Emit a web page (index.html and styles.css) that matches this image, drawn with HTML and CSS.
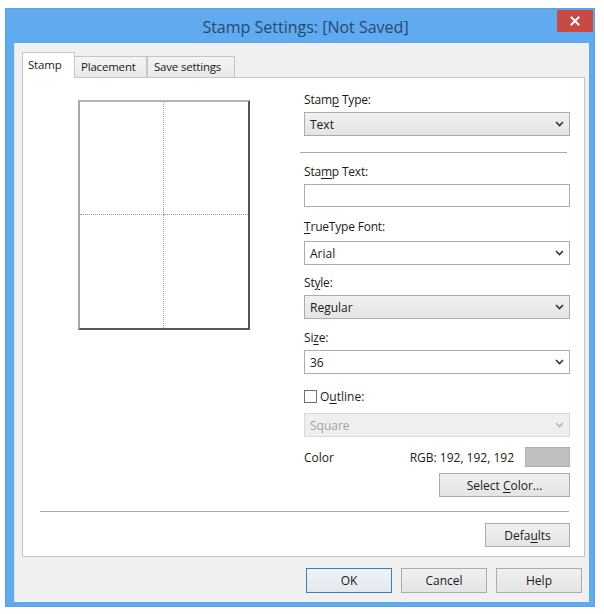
FILE: index.html
```html
<!DOCTYPE html>
<html>
<head>
<meta charset="utf-8">
<link rel="stylesheet" href="styles.css">
</head>
<body>
<div class="window">
  <div class="titlebar">
    <div></div>
    <div class="title">Stamp Settings: [Not Saved]</div>
    <div class="close">
      <svg width="10" height="10" viewBox="0 0 10 10"><path d="M1.5 1.5 L8.5 8.5 M8.5 1.5 L1.5 8.5" stroke="#fff" stroke-width="2" stroke-linecap="square"/></svg>
    </div>
  </div>
  <div class="client">
    <div class="tabs">
      <div class="tab active">Stamp</div>
      <div class="tab t-place">Placement</div>
      <div class="tab t-save">Save settings</div>
    </div>
    <div class="panel">
      <div class="top">
        <div class="preview">
          <div class="cell c1"></div><div class="cell c2"></div>
          <div class="cell c3"></div><div class="cell c4"></div>
        </div>
        <div class="form">
          <div class="label">Stam<u>p</u> Type:</div>
          <div class="combo gray g1"><span>Text</span><svg class="chev" width="9" height="6" viewBox="0 0 9 6"><path d="M1 1 L4.5 4.5 L8 1" fill="none" stroke="#333" stroke-width="1.6"/></svg></div>
          <div class="sep sep1"></div>
          <div class="label l2">Sta<u>m</u>p Text:</div>
          <div class="input"></div>
          <div class="label l3"><u>T</u>rueType Font:</div>
          <div class="combo white g3"><span>Arial</span><svg class="chev" width="9" height="6" viewBox="0 0 9 6"><path d="M1 1 L4.5 4.5 L8 1" fill="none" stroke="#333" stroke-width="1.6"/></svg></div>
          <div class="label l4">St<u>y</u>le:</div>
          <div class="combo gray g4"><span>Regular</span><svg class="chev" width="9" height="6" viewBox="0 0 9 6"><path d="M1 1 L4.5 4.5 L8 1" fill="none" stroke="#333" stroke-width="1.6"/></svg></div>
          <div class="label l5">Si<u>z</u>e:</div>
          <div class="combo white g4"><span>36</span><svg class="chev" width="9" height="6" viewBox="0 0 9 6"><path d="M1 1 L4.5 4.5 L8 1" fill="none" stroke="#333" stroke-width="1.6"/></svg></div>
          <div class="check-row"><span class="box"></span><span>O<u>u</u>tline:</span></div>
          <div class="combo disabled g6"><span>Square</span><svg class="chev" width="9" height="6" viewBox="0 0 9 6"><path d="M1 1 L4.5 4.5 L8 1" fill="none" stroke="#b8b8b8" stroke-width="1.6"/></svg></div>
          <div class="color-row"><span>Color</span><span class="rgb">RGB: 192, 192, 192</span><span class="swatch"></span></div>
          <div class="btn-right"><div class="btn select-color"><span>Select <u>C</u>olor...</span></div></div>
        </div>
      </div>
      <div class="sep sep2"></div>
      <div class="btn-right"><div class="btn defaults"><span>Defa<u>u</u>lts</span></div></div>
    </div>
    <div class="buttons">
      <div class="btn main default">OK</div>
      <div class="btn main">Cancel</div>
      <div class="btn main">Help</div>
    </div>
  </div>
</div>
</body>
</html>
```
FILE: styles.css
```css
* { box-sizing: border-box; }
html, body { margin: 0; padding: 0; background: #ffffff; }
body {
  font-family: "Open Sans", "Noto Sans", sans-serif;
  font-size: 12px;
  color: #1a1a1a;
  padding: 8px 0 0 5px;
}
u { text-decoration: underline; text-underline-offset: 2px; }
.window {
  width: 590px;
  height: 599px;
  background: #60aaef;
  padding: 0 5px 5px 8px;
  border: 1px solid #5aa2e6;
}
.titlebar {
  height: 34px;
  display: grid;
  grid-template-columns: 1fr auto 1fr;
  align-items: start;
}
.title {
  font-size: 16px;
  color: #27496f;
  margin-top: 7px;
  line-height: 22px;
  padding-left: 8px;
}
.close {
  justify-self: end;
  width: 36px;
  height: 22px;
  margin-top: 1px;
  margin-right: -4px;
  background: #c94a43;
  display: flex;
  align-items: center;
  justify-content: center;
}
.client {
  background: #f0f0f0;
  height: 559px;
  padding: 9px 7px 8px 7px;
  border-left: 1px solid #d6e3f0;
}
.tabs {
  display: flex;
  align-items: flex-end;
  height: 25px;
  position: relative;
  z-index: 1;
}
.tab {
  height: 21px;
  border: 1px solid #c6c6c6;
  border-bottom: none;
  background: linear-gradient(#f4f4f4, #e9e9e9);
  font-size: 11.5px;
  line-height: 19px;
  padding-left: 6px;
  letter-spacing: -0.2px;
}
.tab.active {
  height: 26px;
  width: 53px;
  margin-bottom: -1px;
  background: #ffffff;
  line-height: 24px;
  padding-left: 5px;
}
.t-place { width: 72px; border-left: none; }
.t-save { width: 88px; border-left: 1px solid #c6c6c6; }
.panel {
  width: 563px;
  background: #ffffff;
  border: 1px solid #c6c6c6;
  padding: 14px 14px 9px 17px;
}
.top { display: flex; align-items: flex-start; }
.preview {
  width: 172px;
  height: 230px;
  margin-left: 38px;
  margin-top: 8px;
  border-top: 2px solid #b4b4b4;
  border-left: 2px solid #a8a8a8;
  border-right: 2px solid #555555;
  border-bottom: 2px solid #5a5a5a;
  display: grid;
  grid-template-columns: 1fr 1fr;
  grid-template-rows: 1fr 1fr;
}
.c1, .c3 { border-right: 1px dotted #9a9a9a; }
.c1, .c2 { border-bottom: 1px dotted #9a9a9a; }
.form {
  width: 266px;
  margin-left: 54px;
  display: flex;
  flex-direction: column;
}
.label { line-height: 16px; height: 16px; letter-spacing: -0.2px; }
.l2 { margin-top: 10px; }
.l3 { margin-top: 12px; }
.l4 { margin-top: 10px; }
.l5 { margin-top: 11px; }
.combo {
  height: 24px;
  display: flex;
  align-items: center;
  justify-content: space-between;
  padding: 0 5px 0 5px;
  border: 1px solid #acacac;
}
.combo.gray { background: linear-gradient(#f1f1f1, #e4e4e4); }
.combo.white { background: #ffffff; border-color: #abadb3; }
.combo.disabled { background: #efefef; border-color: #d9d9d9; color: #a3a3a3; }
.g1 { margin-top: 4px; }
.g3 { margin-top: 6px; }
.g4 { margin-top: 4px; }
.g6 { margin-top: 9px; }
.input {
  height: 23px;
  margin-top: 4px;
  border: 1px solid #abadb3;
  background: #ffffff;
}
.sep {
  height: 2px;
  border-top: 1px solid #a9a9a9;
  border-bottom: 1px solid #ffffff;
}
.sep1 { margin: 16px 3px 0 -4px; }
.sep2 { margin: 14px 1px 0 0; }
.check-row {
  margin-top: 14px;
  height: 16px;
  display: flex;
  align-items: center;
  gap: 3px;
}
.box {
  width: 13px;
  height: 13px;
  border: 1px solid #707070;
  background: #ffffff;
}
.color-row {
  margin-top: 10px;
  height: 20px;
  display: flex;
  align-items: center;
}
.rgb { margin-left: auto; margin-right: 11px; }
.swatch {
  width: 45px;
  height: 20px;
  background: #c0c0c0;
  border: 1px solid #b0b0b0;
}
.btn-right { display: flex; justify-content: flex-end; }
.btn {
  height: 24px;
  border: 1px solid #acacac;
  background: linear-gradient(#f0f0f0, #e5e5e5);
  display: flex;
  align-items: center;
  justify-content: center;
}
.select-color { width: 131px; margin-top: 6px; }
.defaults { width: 85px; margin-top: 10px; }
.buttons {
  margin-top: 11px;
  display: flex;
  justify-content: flex-end;
  gap: 9px;
}
.btn.main { width: 86px; height: 25px; }
.btn.default { border-color: #3c7fb1; background: linear-gradient(#eef3f8, #e2e8ee); }
```
